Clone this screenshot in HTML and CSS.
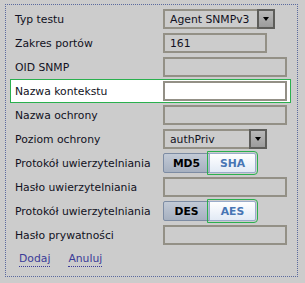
FILE: index.html
```html
<!DOCTYPE html>
<html lang="pl">
<head>
    <meta charset="UTF-8">
    <title>Test SNMP</title>
    <link rel="stylesheet" href="styles.css">
</head>
<body>
    <form class="panel">
        <div class="row">
            <label>Typ testu</label>
            <div class="select select-wide"><span>Agent SNMPv3</span><i class="arrow"></i></div>
        </div>
        <div class="row">
            <label>Zakres portów</label>
            <input type="text" class="field field-short" value="161">
        </div>
        <div class="row">
            <label>OID SNMP</label>
            <input type="text" class="field">
        </div>
        <div class="row row-active">
            <label>Nazwa kontekstu</label>
            <input type="text" class="field">
        </div>
        <div class="row">
            <label>Nazwa ochrony</label>
            <input type="text" class="field">
        </div>
        <div class="row">
            <label>Poziom ochrony</label>
            <div class="select"><span>authPriv</span><i class="arrow"></i></div>
        </div>
        <div class="row">
            <label>Protokół uwierzytelniania</label>
            <div class="toggle">
                <button type="button" class="toggle-btn">MD5</button>
                <button type="button" class="toggle-btn on">SHA</button>
            </div>
        </div>
        <div class="row">
            <label>Hasło uwierzytelniania</label>
            <input type="password" class="field">
        </div>
        <div class="row">
            <label>Protokół uwierzytelniania</label>
            <div class="toggle">
                <button type="button" class="toggle-btn">DES</button>
                <button type="button" class="toggle-btn on">AES</button>
            </div>
        </div>
        <div class="row">
            <label>Hasło prywatności</label>
            <input type="password" class="field">
        </div>
        <div class="actions">
            <a href="#">Dodaj</a>
            <a href="#">Anuluj</a>
        </div>
    </form>
</body>
</html>
```

FILE: styles.css
```css
body {
    margin: 0;
    background-color: #cccccc;
    font-family: "DejaVu Sans", Verdana, sans-serif;
    font-size: 10.8px;
    color: #111122;
}

.panel {
    margin: 4px 7px 0 5px;
    height: 269px;
    padding: 2px 6px 0 4px;
    border: 1px dotted #5b6a9e;
}

.row {
    display: flex;
    align-items: center;
    height: 22px;
    padding: 0 0 0 4px;
    border: 1px solid transparent;
}

.row-active {
    background-color: #ffffff;
    border-color: #2ab04e;
}

.row label {
    width: 148px;
    flex-shrink: 0;
}

.field {
    box-sizing: border-box;
    width: 124px;
    height: 20px;
    margin: 0;
    padding: 0 5px;
    border: 2px solid #939086;
    background: transparent;
    font-family: inherit;
    font-size: 10.8px;
    color: #111122;
}

.field-short {
    width: 104px;
}

.select {
    box-sizing: border-box;
    display: flex;
    align-items: center;
    justify-content: space-between;
    width: 104px;
    height: 20px;
    padding-left: 5px;
    border: 2px solid #939086;
}

.select-wide {
    width: 112px;
}

.arrow {
    box-sizing: border-box;
    width: 18px;
    height: 20px;
    margin-right: -2px;
    border: 2px solid #5d5d5a;
    background: linear-gradient(#b8b8b8, #9c9c9c);
    position: relative;
}

.arrow::after {
    content: "";
    position: absolute;
    left: 4px;
    top: 6px;
    border-left: 3px solid transparent;
    border-right: 3px solid transparent;
    border-top: 4px solid #000;
}

.toggle {
    display: flex;
}

.toggle-btn {
    box-sizing: border-box;
    width: 47px;
    height: 20px;
    padding: 0;
    font-family: inherit;
    font-size: 10.8px;
    font-weight: bold;
    color: #000;
    border: 1px solid #7d8ca3;
    border-radius: 2px 0 0 2px;
    background: linear-gradient(#c2cad6, #a6b0c0);
}

.toggle-btn.on {
    margin-left: -1px;
    color: #4876b4;
    border-color: #9aaccb;
    border-radius: 0 2px 2px 0;
    background: linear-gradient(#ffffff, #e2eaf5);
    outline: 1px solid #2ab04e;
    outline-offset: 1px;
}

.actions {
    display: flex;
    gap: 18px;
    padding: 5px 0 0 9px;
}

.actions a {
    color: #3b3b98;
    text-decoration: none;
    border-bottom: 1px dotted #3b3b98;
    padding-bottom: 1px;
}
```
